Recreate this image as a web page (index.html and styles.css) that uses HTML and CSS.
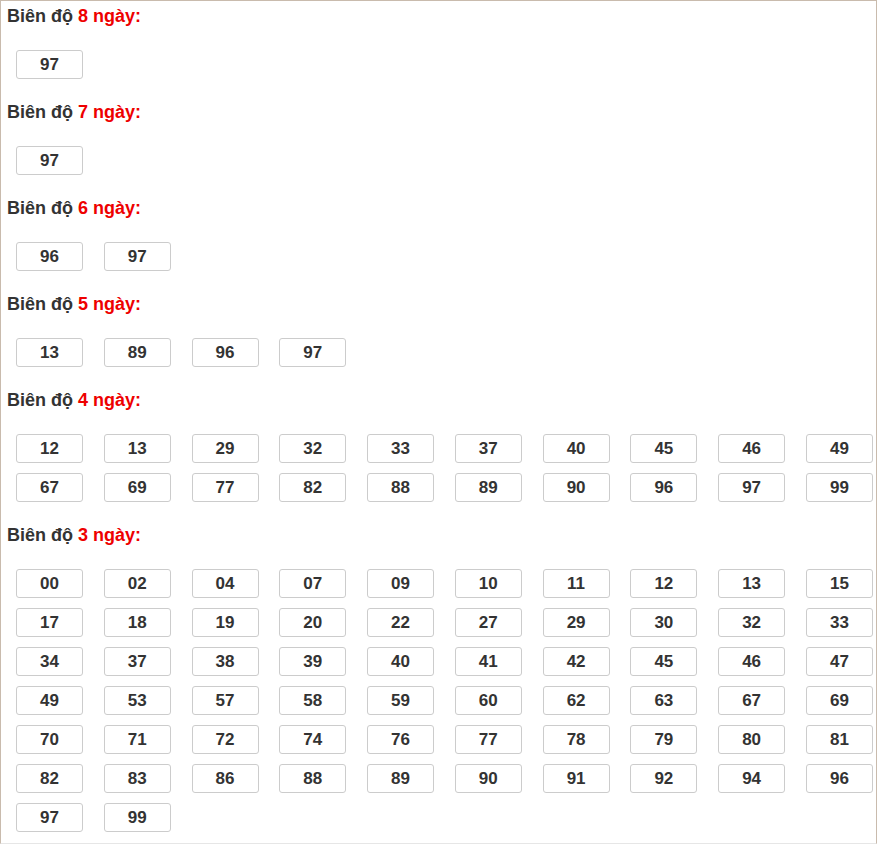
FILE: index.html
```html
<!DOCTYPE html>
<html lang="vi">
<head>
<meta charset="utf-8">
<title>Biên độ</title>
<link rel="stylesheet" href="styles.css">
</head>
<body>
<div class="box">
  <div class="section">
    <div class="title">Biên độ <span class="red">8 ngày:</span></div>
    <div class="grid"><span class="num">97</span></div>
  </div>
  <div class="section">
    <div class="title">Biên độ <span class="red">7 ngày:</span></div>
    <div class="grid"><span class="num">97</span></div>
  </div>
  <div class="section">
    <div class="title">Biên độ <span class="red">6 ngày:</span></div>
    <div class="grid"><span class="num">96</span><span class="num">97</span></div>
  </div>
  <div class="section">
    <div class="title">Biên độ <span class="red">5 ngày:</span></div>
    <div class="grid"><span class="num">13</span><span class="num">89</span><span class="num">96</span><span class="num">97</span></div>
  </div>
  <div class="section">
    <div class="title">Biên độ <span class="red">4 ngày:</span></div>
    <div class="grid">
      <span class="num">12</span><span class="num">13</span><span class="num">29</span><span class="num">32</span><span class="num">33</span><span class="num">37</span><span class="num">40</span><span class="num">45</span><span class="num">46</span><span class="num">49</span>
      <span class="num">67</span><span class="num">69</span><span class="num">77</span><span class="num">82</span><span class="num">88</span><span class="num">89</span><span class="num">90</span><span class="num">96</span><span class="num">97</span><span class="num">99</span>
    </div>
  </div>
  <div class="section">
    <div class="title">Biên độ <span class="red">3 ngày:</span></div>
    <div class="grid">
      <span class="num">00</span><span class="num">02</span><span class="num">04</span><span class="num">07</span><span class="num">09</span><span class="num">10</span><span class="num">11</span><span class="num">12</span><span class="num">13</span><span class="num">15</span>
      <span class="num">17</span><span class="num">18</span><span class="num">19</span><span class="num">20</span><span class="num">22</span><span class="num">27</span><span class="num">29</span><span class="num">30</span><span class="num">32</span><span class="num">33</span>
      <span class="num">34</span><span class="num">37</span><span class="num">38</span><span class="num">39</span><span class="num">40</span><span class="num">41</span><span class="num">42</span><span class="num">45</span><span class="num">46</span><span class="num">47</span>
      <span class="num">49</span><span class="num">53</span><span class="num">57</span><span class="num">58</span><span class="num">59</span><span class="num">60</span><span class="num">62</span><span class="num">63</span><span class="num">67</span><span class="num">69</span>
      <span class="num">70</span><span class="num">71</span><span class="num">72</span><span class="num">74</span><span class="num">76</span><span class="num">77</span><span class="num">78</span><span class="num">79</span><span class="num">80</span><span class="num">81</span>
      <span class="num">82</span><span class="num">83</span><span class="num">86</span><span class="num">88</span><span class="num">89</span><span class="num">90</span><span class="num">91</span><span class="num">92</span><span class="num">94</span><span class="num">96</span>
      <span class="num">97</span><span class="num">99</span>
    </div>
  </div>
</div>
</body>
</html>
```

FILE: styles.css
```css
html, body {
  margin: 0;
  padding: 0;
  background: #fff;
}
body {
  font-family: "Liberation Sans", Arial, sans-serif;
  color: #333;
  width: 877px;
}
.box {
  border: 1px solid #c9bbad;
  border-bottom-color: #e6e6e6;
  padding: 4px 0 11px 6px;
  box-sizing: border-box;
  width: 877px;
}
.title {
  font-size: 18px;
  font-weight: bold;
  line-height: 22px;
  height: 22px;
  color: #333;
}
.red {
  color: #e00;
}
.grid {
  display: grid;
  grid-template-columns: repeat(10, 67px);
  column-gap: 20.78px;
  row-gap: 10px;
  margin: 23px 0 22px 9px;
}
.section:last-child .grid {
  margin-bottom: 0;
}
.num {
  display: flex;
  align-items: center;
  justify-content: center;
  height: 29px;
  box-sizing: border-box;
  border: 1px solid #ccc;
  border-radius: 3px;
  font-size: 17px;
  font-weight: bold;
  color: #333;
}
```
